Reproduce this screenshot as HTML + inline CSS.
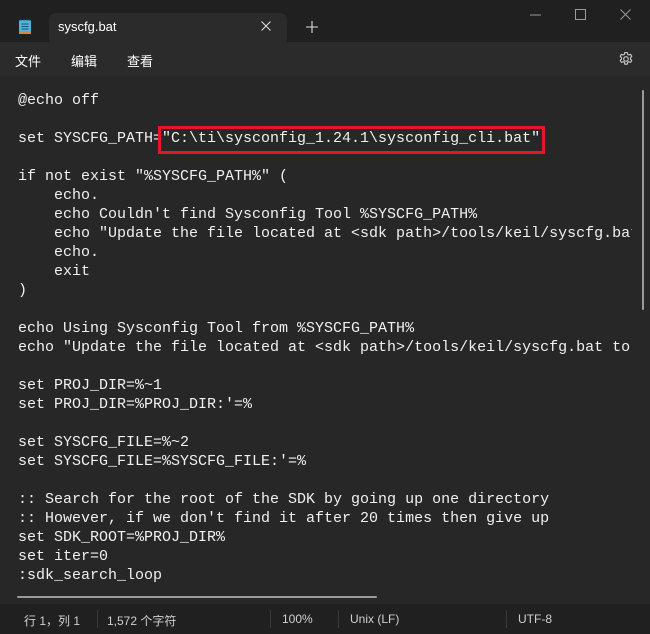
<!DOCTYPE html>
<html><head><meta charset="utf-8"><style>
*{margin:0;padding:0;box-sizing:border-box}
body{width:650px;height:634px;background:#202020;overflow:hidden;position:relative;font-family:"Liberation Sans","Noto Sans CJK SC",sans-serif;color:#fff}
.tabbar{position:absolute;left:0;top:0;width:650px;height:42px;background:#202020}
.tab{position:absolute;left:49px;top:13px;width:238px;height:30px;background:#2b2b2b;border-radius:7px 7px 0 0}
.menubar{position:absolute;left:0;top:42px;width:650px;height:34px;background:#2b2b2b}
.editor{position:absolute;left:0;top:76px;width:650px;height:528px;background:#272727}
pre{position:absolute;left:18px;top:91px;font-family:"Liberation Mono",monospace;font-size:15px;line-height:19px;color:#f0f0f0;white-space:pre}
.status{position:absolute;left:0;top:604px;width:650px;height:30px;background:#202020;font-size:12px;color:#d0d0d0}
.status span{position:absolute;top:8px}
.sep{position:absolute;top:6px;width:1px;height:18px;background:#3a3a3a}
</style></head><body>
<div class="tabbar"></div>
<svg style="position:absolute;left:18px;top:18px" width="14" height="17"><rect x="1" y="2" width="12" height="14" rx="1.5" fill="#4fb3e0"/><rect x="1" y="13" width="12" height="3" fill="#d9883a"/><path d="M3.5 6h7M3.5 8.5h7M3.5 11h7" stroke="#16597a" stroke-width="1"/><path d="M3 1v2M6 1v2M9 1v2M11 1v2" stroke="#16597a"/></svg>
<div class="tab"></div>
<div style="position:absolute;left:58px;top:19px;font-size:13px;color:#fff">syscfg.bat</div>
<svg style="position:absolute;left:261px;top:21px" width="10" height="10"><path d="M0.5 0.5l9 9M9.5 0.5l-9 9" stroke="#ddd" stroke-width="1.1"/></svg>
<svg style="position:absolute;left:306px;top:21px" width="12" height="12"><path d="M6 0v12M0 6h12" stroke="#ddd" stroke-width="1.1"/></svg>
<svg style="position:absolute;left:530px;top:14px" width="12" height="2"><path d="M0 1h11" stroke="#999"/></svg>
<svg style="position:absolute;left:575px;top:9px" width="11" height="11"><rect x="0.5" y="0.5" width="10" height="10" fill="none" stroke="#999"/></svg>
<svg style="position:absolute;left:620px;top:9px" width="11" height="11"><path d="M0.5 0.5l10 10M10.5 0.5l-10 10" stroke="#999"/></svg>
<div class="menubar"></div>
<div style="position:absolute;left:15px;top:51px;font-size:13px">文件</div>
<div style="position:absolute;left:71px;top:51px;font-size:13px">编辑</div>
<div style="position:absolute;left:127px;top:51px;font-size:13px">查看</div>
<svg style="position:absolute;left:618px;top:51px" width="16" height="16" viewBox="0 0 16 16"><circle cx="8" cy="8" r="2.3" fill="none" stroke="#ccc" stroke-width="1.1"/><path d="M6.8 1.5h2.4l.4 1.8 1.3.7 1.7-.7 1.2 2-1.3 1.3v1.5l1.3 1.3-1.2 2-1.7-.7-1.3.7-.4 1.8H6.8l-.4-1.8-1.3-.7-1.7.7-1.2-2 1.3-1.3V6.6L2.2 5.3l1.2-2 1.7.7 1.3-.7z" fill="none" stroke="#ccc" stroke-width="1.1" stroke-linejoin="round"/></svg>
<div class="editor"></div>
<pre>@echo off

set SYSCFG_PATH="C:\ti\sysconfig_1.24.1\sysconfig_cli.bat"

if not exist "%SYSCFG_PATH%" (
    echo.
    echo Couldn't find Sysconfig Tool %SYSCFG_PATH%
    echo "Update the file located at &lt;sdk path&gt;/tools/keil/syscfg.bat
    echo.
    exit
)

echo Using Sysconfig Tool from %SYSCFG_PATH%
echo "Update the file located at &lt;sdk path&gt;/tools/keil/syscfg.bat to

set PROJ_DIR=%~1
set PROJ_DIR=%PROJ_DIR:'=%

set SYSCFG_FILE=%~2
set SYSCFG_FILE=%SYSCFG_FILE:'=%

:: Search for the root of the SDK by going up one directory
:: However, if we don't find it after 20 times then give up
set SDK_ROOT=%PROJ_DIR%
set iter=0
:sdk_search_loop</pre>
<div style="position:absolute;left:632px;top:76px;width:18px;height:528px;background:#272727"></div>
<div style="position:absolute;left:642px;top:90px;width:2px;height:220px;background:#9a9a9a;border-radius:1px"></div>
<div style="position:absolute;left:158px;top:126px;width:387px;height:28px;border:3px solid #e5162b"></div>
<div style="position:absolute;left:17px;top:596px;width:360px;height:2px;background:#9a9a9a;border-radius:1px"></div>
<div class="status">
<span style="left:24px">行 1，列 1</span>
<div class="sep" style="left:97px"></div>
<span style="left:107px">1,572 个字符</span>
<div class="sep" style="left:270px"></div>
<span style="left:282px">100%</span>
<div class="sep" style="left:338px"></div>
<span style="left:350px">Unix (LF)</span>
<div class="sep" style="left:506px"></div>
<span style="left:518px">UTF-8</span>
</div>
</body></html>
